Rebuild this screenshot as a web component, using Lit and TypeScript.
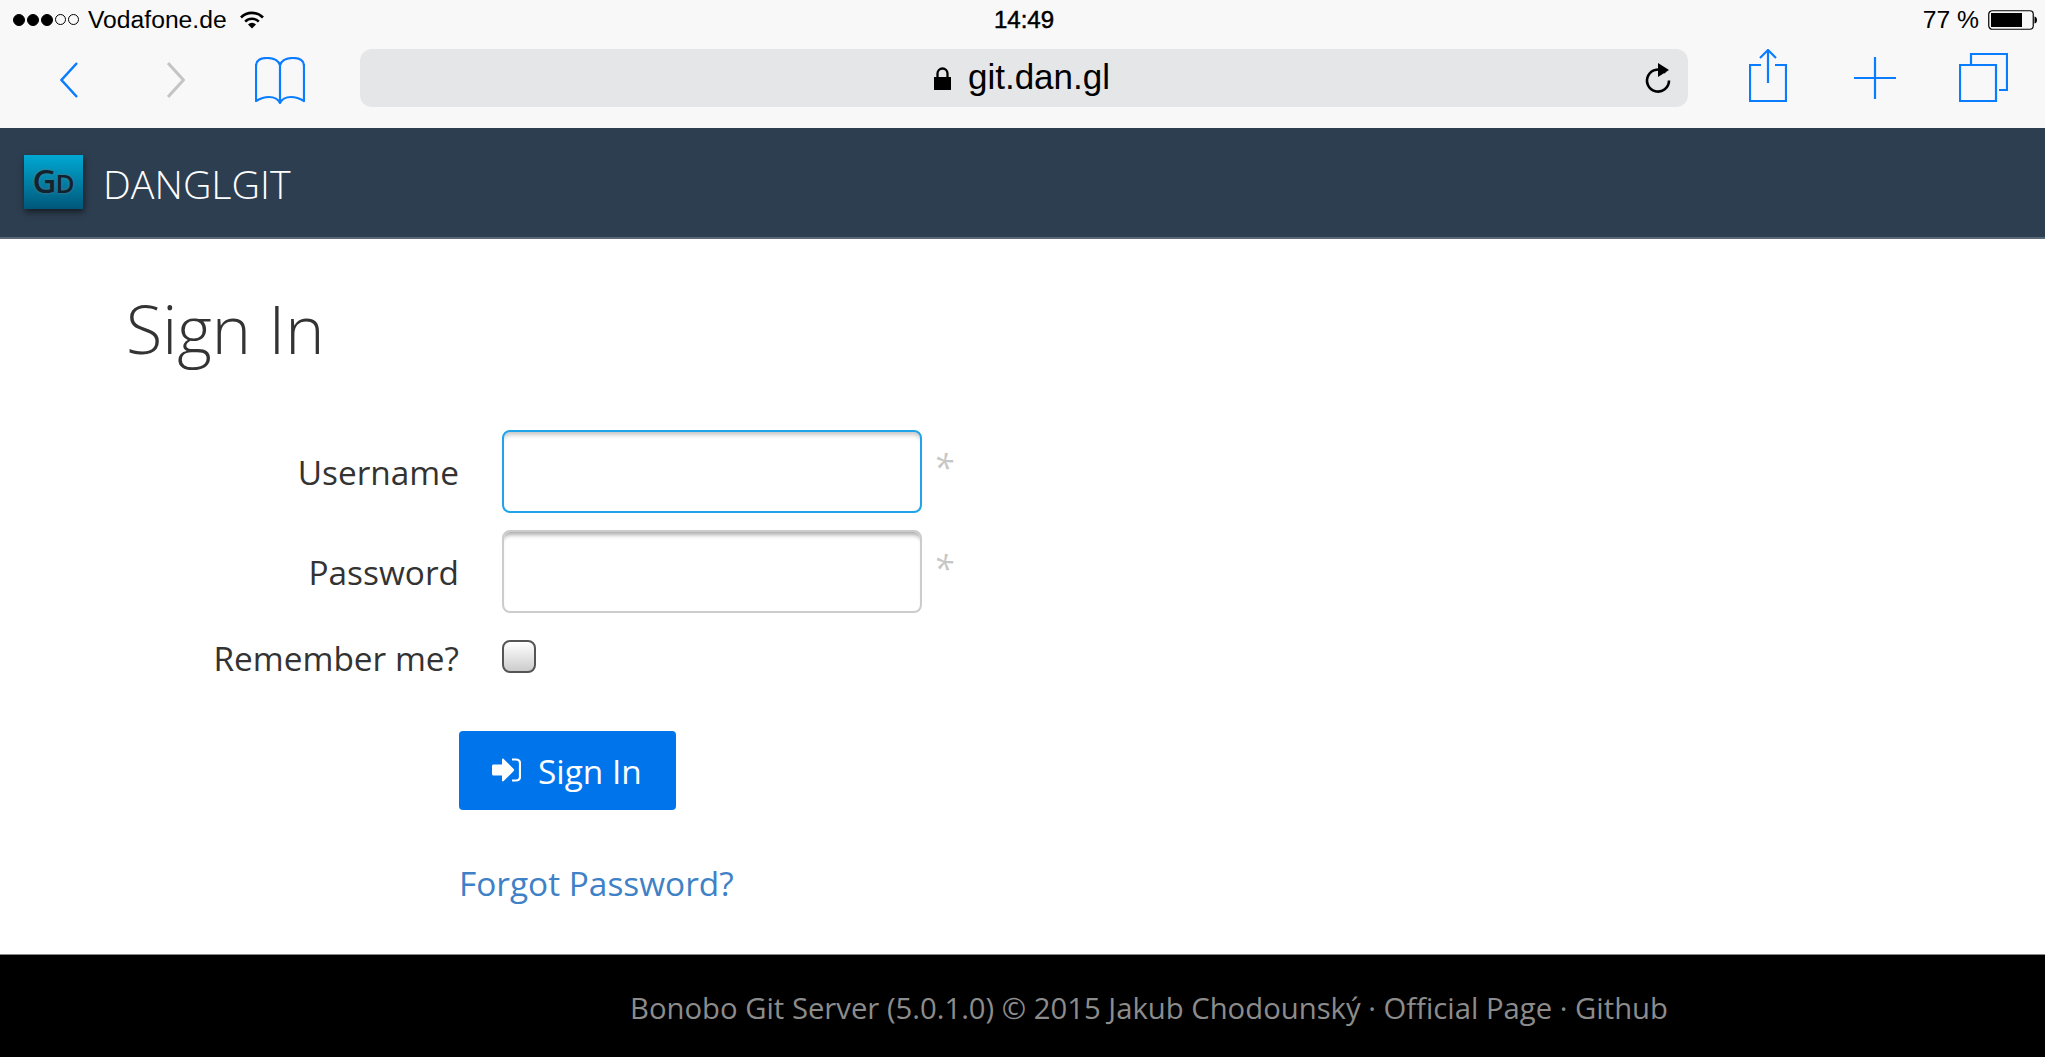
import { LitElement, html, css } from "lit";
import { customElement } from "lit/decorators.js";

@customElement("app-root")
export class AppRoot extends LitElement {
  static styles = css`
    :host { display: block; width: 2045px; height: 1057px; overflow: hidden; background: #fff; font-family: "Open Sans", sans-serif; }
    * { box-sizing: border-box; }
    .chrome { background: #f8f8f8; height: 128px; font-family: "Liberation Sans", sans-serif; color: #000; }
    .status { height: 42px; display: grid; grid-template-columns: 1fr auto 1fr; align-items: center; padding: 0 8px 2px 13px; font-size: 24.7px; }
    .left, .right { display: flex; align-items: center; }
    .right { justify-content: flex-end; }
    .signal { display: flex; gap: 2px; margin-right: 9px; }
    .dot { width: 11px; height: 11px; border-radius: 50%; border: 1px solid #000; }
    .dot.on { background: #000; width: 12px; height: 12px; }
    .wifi { margin-left: 13px; }
    .time { font-size: 24px; -webkit-text-stroke: 0.5px #000; margin-left: -2px; }
    .pct { margin-right: 9px; }
    .toolbar { height: 86px; display: flex; align-items: flex-start; padding: 7px 37px 0 60px; }
    .toolbar svg { display: block; flex: none; }
    .back { margin-top: 13px; }
    .forward { margin: 13px 0 0 89px; }
    .book { margin: 8px 0 0 70px; }
    .url { margin-left: 55px; width: 1328px; height: 58px; background: #e5e6e8; border-radius: 12px; display: flex; align-items: center; justify-content: center; font-size: 35px; padding-right: 4px; position: relative; }
    .url span { position: relative; top: -1px; }
    .lock { margin-right: 17px; }
    .reload { position: absolute; right: 16px; top: 13px; }
    .share { margin: 0 0 0 61px; }
    .plus { margin: 8px 0 0 67px; }
    .tabs { margin: 4px 0 0 63px; }
    .nav { height: 111px; background: #2d3e50; border-bottom: 2px solid #5a6878; display: flex; align-items: center; padding: 0 0 0 24px; }
    .logo { width: 59px; height: 54px; background: linear-gradient(#00a8d4, #0090b8 30%, #00587a); box-shadow: 1px 3px 6px rgba(0,0,0,.55); display: flex; align-items: baseline; justify-content: center; padding-top: 6px; font-family: "Open Sans", sans-serif; font-weight: 600; color: #12222e; text-shadow: 0 0 3px #5a7a88; font-size: 33px; line-height: 40px; margin-top: -1px; }
    .logo small { font-size: 26px; margin-left: -1px; }
    .brand { margin-left: 20px; margin-top: 2px; color: #fff; font-weight: 300; font-size: 39.4px; }
    main { height: 715px; padding: 0 0 0 126px; color: #333; }
    h1 { margin: 0; padding-top: 45px; height: 191px; font-weight: 300; font-size: 66.5px; line-height: 88px; color: #333; }
    .row { display: grid; grid-template-columns: 333px 420px auto; column-gap: 43px; }
    label { text-align: right; font-size: 33.4px; line-height: 44px; color: #333; }
    input.text { width: 420px; height: 83px; border: 2px solid #ccc; border-radius: 8px; background: #fff; box-shadow: inset 0 6px 4px -3px rgba(0,0,0,.32); outline: none; display: block; padding: 0; }
    input.focus { border-color: #1fa4ea; box-shadow: inset 0 6px 4px -3px rgba(0,0,0,.22); }
    .r1 { height: 100px; }
    .r1 label, .r2 label { padding-top: 20px; }
    .r2 { height: 110px; }
    .r3 { height: 91px; }
    .r3 label { margin-top: -4px; }
    .star { margin-left: -32px; color: #c6c6c6; font-size: 36px; line-height: 46px; font-style: italic; padding-top: 15px; font-family: "Open Sans", sans-serif; }
    .r2 .star { padding-top: 16px; }
    input.check { appearance: none; margin: 0; display: block; width: 34px; height: 33px; border: 2px solid #555; border-radius: 8px; background: linear-gradient(#fff, #ccc); }
    .actions { margin-left: 333px; }
    button { display: flex; align-items: center; width: 217px; height: 79px; padding: 0 0 0 33px; background: #0075eb; color: #fff; border: 0; border-radius: 4px; font: 400 33.4px "Open Sans", sans-serif; }
    button svg { margin-right: 17px; margin-bottom: 2px; }
    a { color: #3e81c6; text-decoration: none; font-size: 33.4px; line-height: 46px; }
    .forgot { margin-top: 50px; }
    footer { height: 103px; background: #000; border-top: 1px solid #888; color: #8c8c8c; font-size: 29.27px; padding: 32px 0 0 630px; line-height: 42px; white-space: nowrap; }
  `;

  render() {
    return html`
      <div class="chrome">
        <div class="status">
          <div class="left">
            <span class="signal">
              <span class="dot on"></span><span class="dot on"></span><span class="dot on"></span><span class="dot"></span><span class="dot"></span>
            </span>
            <span>Vodafone.de</span>
            <svg class="wifi" width="24" height="18" viewBox="0 0 24 18">
              <path d="M1 6.5a15.5 15.5 0 0 1 22 0" fill="none" stroke="#000" stroke-width="2.6"/>
              <path d="M5.2 10.6a9.6 9.6 0 0 1 13.6 0" fill="none" stroke="#000" stroke-width="2.6"/>
              <path d="M8 13.5a5.6 5.6 0 0 1 8 0L12 17.5z" fill="#000"/>
            </svg>
          </div>
          <div class="time">14:49</div>
          <div class="right">
            <span class="pct">77 %</span>
            <svg width="49" height="20" viewBox="0 0 49 20">
              <rect x=".75" y=".75" width="44.5" height="18.5" rx="3.5" fill="none" stroke="#000" stroke-width="1.2"/>
              <rect x="3" y="3" width="31" height="14" fill="#000"/>
              <path d="M46.5 6.5c2 .5 2.5 2 2.5 3.500s-.5 3-2.500 3.500z" fill="#000"/>
            </svg>
          </div>
        </div>
        <div class="toolbar">
          <svg class="back" width="18" height="36" viewBox="0 0 18 36"><path d="M17 1 1.500 18 17 35" fill="none" stroke="#0a7cff" stroke-width="2.500"/></svg>
          <svg class="forward" width="18" height="36" viewBox="0 0 18 36"><path d="M1 1 16.500 18 1 35" fill="none" stroke="#c4c4c4" stroke-width="3"/></svg>
          <svg class="book" width="50" height="47" viewBox="0 0 50 47">
            <path d="M25 8C23 3 18 1 12 1 6 1 1 3 1 9V44C6 41 10 40 14 40 19 40 23 42 25 46 27 42 31 40 36 40 40 40 44 41 49 44V9C49 3 44 1 38 1 32 1 27 3 25 8ZM25 8V46" fill="none" stroke="#0a7cff" stroke-width="2.200" stroke-linejoin="round"/>
          </svg>
          <div class="url">
            <svg class="lock" width="17" height="23" viewBox="0 0 17 23"><path d="M0 10H17V23H0Z" fill="#000"/><path d="M3.500 11V6.500a5 5 0 0 1 10 0V11" fill="none" stroke="#000" stroke-width="2.300"/></svg>
            <span>git.dan.gl</span>
            <svg class="reload" width="28" height="32" viewBox="0 0 28 32">
              <path d="M21.500 10.500A11 11 0 1 0 25 18.500" fill="none" stroke="#000" stroke-width="2.600"/>
              <path d="M14 1 25 8 14 15Z" fill="#000"/>
            </svg>
          </div>
          <svg class="share" width="38" height="53" viewBox="0 0 38 53">
            <path d="M12 16H1V52H37V16H26" fill="none" stroke="#0a7cff" stroke-width="2.200"/>
            <path d="M19 2V34M11 9 19 1 27 9" fill="none" stroke="#0a7cff" stroke-width="2.200"/>
          </svg>
          <svg class="plus" width="42" height="42" viewBox="0 0 42 42"><path d="M21 0V42M0 21H42" fill="none" stroke="#0a7cff" stroke-width="2.200"/></svg>
          <svg class="tabs" width="49" height="49" viewBox="0 0 49 49">
            <path d="M12 11V1H48V37H40" fill="none" stroke="#0a7cff" stroke-width="2.200"/>
            <path d="M1 12H37V48H1Z" fill="none" stroke="#0a7cff" stroke-width="2.200"/>
          </svg>
        </div>
      </div>
      <div class="nav">
        <div class="logo">G<small>D</small></div>
        <div class="brand">DANGLGIT</div>
      </div>
      <main>
        <h1>Sign In</h1>
        <div class="row r1"><label>Username</label><input class="text focus" type="text" aria-label="Username"><span class="star">*</span></div>
        <div class="row r2"><label>Password</label><input class="text" type="password" aria-label="Password"><span class="star">*</span></div>
        <div class="row r3"><label>Remember me?</label><input class="check" type="checkbox" aria-label="Remember me?"></div>
        <div class="actions">
          <button>
            <svg width="29" height="24" viewBox="0 0 29 24">
              <path d="M1.500 6.500H10V1.500C10 .5 11 .2 11.700 .9L21.500 10.800C22.300 11.600 22.300 12.400 21.500 13.200L11.700 23.100C11 23.800 10 23.500 10 22.500V17.500H1.500C.6 17.500 0 16.900 0 16V8C0 7.100 .6 6.500 1.500 6.500Z" fill="#fff"/>
              <path d="M20 1.500H24C26.500 1.500 28 3 28 5.500V18.500C28 21 26.500 22.500 24 22.500H20" fill="none" stroke="#fff" stroke-width="2.200"/>
            </svg>
            Sign In
          </button>
          <div class="forgot"><a href="#">Forgot Password?</a></div>
        </div>
      </main>
      <footer>Bonobo Git Server (5.0.1.0) © 2015 Jakub Chodounský · Official Page · Github</footer>
    `;
  }
}
